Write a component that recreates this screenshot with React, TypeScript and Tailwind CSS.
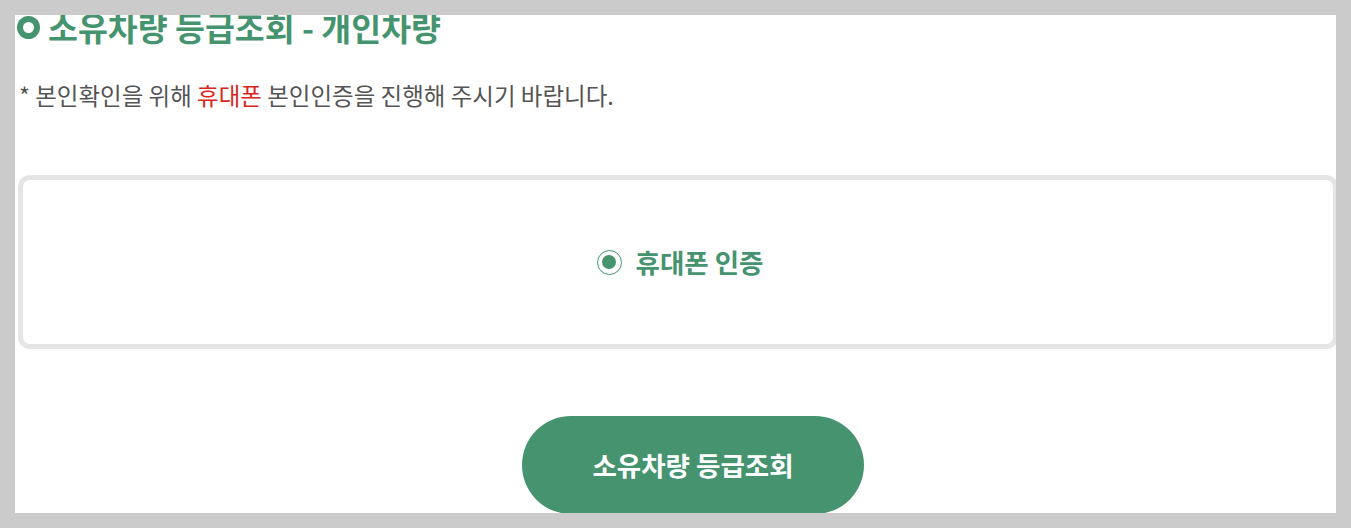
export default function App() {
  return (
    <div
      className="h-[528px] w-[1351px] overflow-hidden bg-[#cbcbcb] pl-[15px] pt-[15px]"
      style={{ fontFamily: '"Noto Sans CJK KR", "Noto Sans", sans-serif' }}
    >
      <div className="h-[498px] w-[1321px] overflow-hidden bg-white">
        {/* Title */}
        <div className="-mt-[11px] flex items-center gap-[8px] pl-[2px]">
          <span className="h-[23px] w-[23px] shrink-0 rounded-full border-[6px] border-[#45946f] bg-white" />
          <h2 className="text-[32.5px] font-bold leading-[46px] text-[#45946f]">
            소유차량 등급조회 - 개인차량
          </h2>
        </div>

        <p className="mt-[29px] pl-[4px] text-[23.5px] leading-[32px] text-[#555555]">
          * 본인확인을 위해 <span className="text-[#d8261d]">휴대폰</span> 본인인증을 진행해 주시기 바랍니다.
        </p>

        {/* Auth method box */}
        <div className="mt-[64px] ml-[3px] flex h-[174px] w-[1320px] items-center justify-center rounded-[12px] border-[5px] border-[#e5e5e5]">
          <label className="ml-[4px] flex items-center gap-[14px]">
            <span className="flex h-[25px] w-[25px] items-center justify-center rounded-full border-[1.5px] border-[#45946f]">
              <span className="h-[14px] w-[14px] rounded-full bg-[#45946f]" />
            </span>
            <span className="text-[26.5px] font-bold leading-[36px] text-[#45946f]">휴대폰 인증</span>
          </label>
        </div>

        {/* Submit */}
        <div className="mt-[67px] flex justify-center pl-[35px]">
          <button className="h-[98px] w-[342px] rounded-full bg-[#45946f] text-[26.5px] font-bold text-white">
            소유차량 등급조회
          </button>
        </div>
      </div>
    </div>
  );
}
